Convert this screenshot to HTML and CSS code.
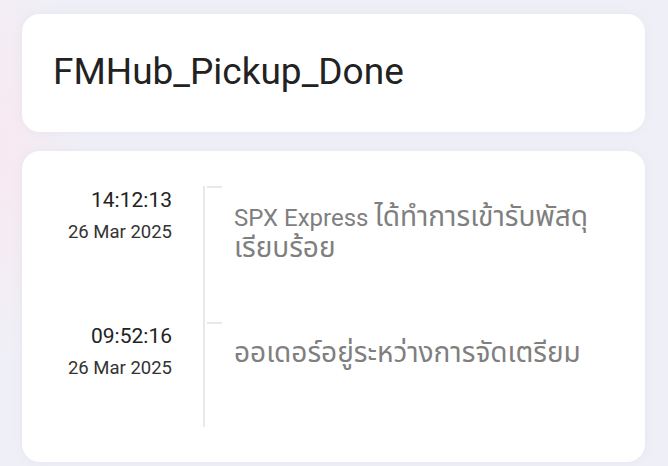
FILE: index.html
```html
<!DOCTYPE html>
<html lang="th">
<head>
<meta charset="utf-8">
<title>FMHub_Pickup_Done</title>
<link rel="stylesheet" href="styles.css">
</head>
<body>
<main class="page">
  <section class="card header-card">
    <h1 class="title">FMHub_Pickup_Done</h1>
  </section>
  <section class="card timeline-card">
    <div class="item">
      <div class="when">
        <div class="time">14:12:13</div>
        <div class="date">26 Mar 2025</div>
      </div>
      <div class="track">
        <p class="desc">SPX Express <span class="th">ได้ทำการเข้ารับพัสดุเรียบร้อย</span></p>
      </div>
    </div>
    <div class="item">
      <div class="when">
        <div class="time">09:52:16</div>
        <div class="date">26 Mar 2025</div>
      </div>
      <div class="track">
        <p class="desc"><span class="th">ออเดอร์อยู่ระหว่างการจัดเตรียม</span></p>
      </div>
    </div>
  </section>
</main>
</body>
</html>
```

FILE: styles.css
```css
html, body {
  margin: 0;
  padding: 0;
}
body {
  width: 668px;
  height: 466px;
  overflow: hidden;
  font-family: Roboto, "Noto Sans Thai", "Noto Sans Thai UI", "Noto Sans", sans-serif;
  background:
    radial-gradient(ellipse 80px 220px at 0px 150px, rgba(250, 232, 240, 0.9), rgba(250, 232, 240, 0) 100%),
    #eff0f7;
}
.page {
  display: flex;
  flex-direction: column;
  gap: 19px;
  padding: 14px 23px 0 22px;
}
.card {
  background: #ffffff;
  border-radius: 18px;
  box-shadow: 0 0 10px rgba(200, 200, 225, 0.25);
}
.header-card {
  height: 118px;
  display: flex;
  align-items: center;
  padding: 0 31px;
  box-sizing: border-box;
}
.title {
  margin: 0 0 4px 0;
  font-weight: 400;
  font-size: 37px;
  color: #222222;
  letter-spacing: 0;
}
.timeline-card {
  height: 311px;
  box-sizing: border-box;
  padding: 35px 22px 37px 0;
  display: flex;
  flex-direction: column;
}
.item {
  display: flex;
}
.when {
  width: 150px;
  flex: none;
  text-align: right;
  color: #222222;
}
.time {
  font-size: 21px;
  line-height: 28px;
}
.date {
  font-size: 18.5px;
  line-height: 24px;
  margin-top: 6px;
  color: #333333;
}
.track {
  position: relative;
  margin-left: 31px;
  border-left: 2px solid #e9e9e9;
  padding: 16px 0 58px 29px;
  flex: 1;
}
.track::before {
  content: "";
  position: absolute;
  top: 0;
  left: 2px;
  width: 15px;
  height: 2px;
  background: #e9e9e9;
}
.desc {
  margin: 0;
  font-size: 24px;
  line-height: 29px;
  color: #7f7f7f;
}
.th {
  font-size: 28px;
}
```
